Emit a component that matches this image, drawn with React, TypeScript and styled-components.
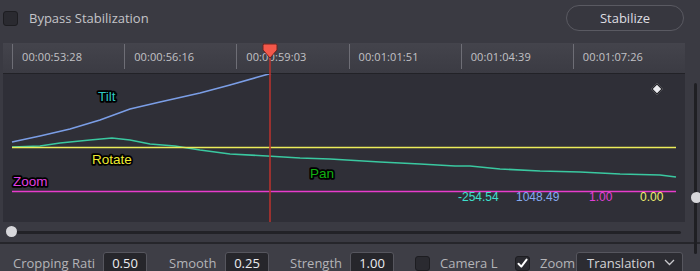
import React from 'react'
import styled, { createGlobalStyle } from 'styled-components'

const GlobalStyle = createGlobalStyle`
  html, body {
    margin: 0;
    padding: 0;
    background: #3a3a42;
  }
  * { box-sizing: border-box; }
`

const Page = styled.div`
  width: 700px;
  height: 271px;
  overflow: hidden;
  background: #3a3a42;
  font-family: 'Open Sans', 'Noto Sans', sans-serif;
  display: flex;
  flex-direction: column;
`

const TopBar = styled.div`
  height: 36px;
  display: flex;
  align-items: center;
  justify-content: space-between;
  padding: 0 16px 0 3px;
  flex-shrink: 0;
`

const CheckRow = styled.label`
  display: flex;
  align-items: center;
  gap: 11px;
  color: #c4c4c8;
  font-size: 13px;
`

const Box = styled.span`
  width: 15px;
  height: 15px;
  border-radius: 3px;
  background: #2a2a30;
  border: 1px solid #1d1d21;
  display: flex;
  align-items: center;
  justify-content: center;
  flex-shrink: 0;
`

const PillButton = styled.button`
  width: 118px;
  height: 26px;
  border-radius: 13px;
  border: 1px solid #5a5a62;
  background: #37373f;
  color: #dedee2;
  font-family: inherit;
  font-size: 13px;
`

const Middle = styled.div`
  display: flex;
  height: 206px;
  flex-shrink: 0;
`

const LeftCol = styled.div`
  width: 685px;
  padding: 7px 0 0 3px;
  display: flex;
  flex-direction: column;
`

const Panel = styled.div`
  position: relative;
  width: 682px;
  height: 179px;
  display: flex;
  flex-direction: column;
`

const Ruler = styled.div`
  height: 31px;
  display: flex;
  padding-left: 9px;
  background: linear-gradient(#44444c, #3b3b43);
  border-bottom: 1px solid #222227;
  flex-shrink: 0;
`

const Tick = styled.div`
  width: 113px;
  height: 25px;
  margin-top: 1px;
  border-left: 1px solid #6e6e76;
  padding-left: 9px;
  display: flex;
  align-items: center;
  color: #c2c2c6;
  font-size: 11px;
  letter-spacing: 0.1px;
`

const Graph = styled.div`
  flex: 1;
  background: #2f2f37;
`

const Playhead = styled.div`
  position: absolute;
  left: 256px;
  top: 0;
  width: 19px;
  height: 179px;
  pointer-events: none;
`

const Diamond = styled.div`
  position: absolute;
  left: 650px;
  top: 42px;
  width: 8px;
  height: 8px;
  background: #ececf0;
  border: 1px solid #1a1a1e;
  transform: rotate(45deg);
`

const HScroll = styled.div`
  position: relative;
  height: 20px;
  display: flex;
  align-items: center;
  padding-left: 5px;
`

const HTrack = styled.div`
  width: 673px;
  height: 3px;
  background: #222227;
  border-radius: 2px;
`

const Knob = styled.div`
  position: absolute;
  width: 11px;
  height: 11px;
  border-radius: 50%;
  background: #d8d8dc;
`

const VScroll = styled.div`
  position: relative;
  width: 15px;
  padding: 47px 0 0 9px;
`

const VTrack = styled.div`
  width: 3px;
  height: 171px;
  background: #1f1f23;
  border-radius: 2px;
`

const Divider = styled.div`
  height: 2px;
  background: #26262b;
  flex-shrink: 0;
`

const BottomBar = styled.div`
  flex: 1;
  background: #3e3e46;
  display: flex;
  align-items: flex-start;
  padding: 8px 0 0 13px;
  color: #b4b4b8;
  font-size: 13px;
`

const Field = styled.div<{ $mr: number }>`
  display: flex;
  align-items: center;
  gap: 7px;
  margin-right: ${p => p.$mr}px;
  flex-shrink: 0;
`

const Label = styled.span<{ $w: number }>`
  width: ${p => p.$w}px;
  white-space: nowrap;
  flex-shrink: 0;
`

const ValueBox = styled.div`
  width: 44px;
  height: 22px;
  background: #26262b;
  border: 1px solid #56565e;
  border-radius: 3px;
  color: #ececf0;
  display: flex;
  align-items: center;
  justify-content: center;
  flex-shrink: 0;
  padding-bottom: 1px;
`

const CheckField = styled.div<{ $mr: number }>`
  display: flex;
  align-items: center;
  gap: 10px;
  height: 22px;
  margin-right: ${p => p.$mr}px;
  flex-shrink: 0;
`

const Dropdown = styled.div`
  width: 107px;
  height: 22px;
  background: #2c2c32;
  border: 1px solid #56565e;
  border-radius: 3px;
  color: #d4d4d8;
  display: flex;
  align-items: center;
  gap: 9px;
  padding: 0 0 1px 10px;
`

const ticks = ['00:00:53:28', '00:00:56:16', '00:00:59:03', '00:01:01:51', '00:01:04:39', '00:01:07:26']

const tiltPts = '12,143 40,137 70,130 100,121 130,110 160,103 200,94 230,86 258,78 276,73'
const panPts =
  '12,148 40,147 60,144 90,141 112,139 130,141 150,145 175,147 200,151 230,155 267,157 300,159 330,160 380,163 420,165 455,167 470,167 500,170 540,172 580,173 620,175 660,176 676,178'

const outline = { paintOrder: 'stroke' as const, stroke: '#000', strokeWidth: 3.5, strokeLinejoin: 'round' as const }

const Chart: React.FC = () => (
  <svg width="682" height="147" viewBox="3 75 682 147" style={{ display: 'block' }}>
    <polyline points={tiltPts} fill="none" stroke="#7b9ee6" strokeWidth="1.6" />
    <polyline points={panPts} fill="none" stroke="#3ac8a0" strokeWidth="1.6" />
    <line x1="12" y1="148.5" x2="676" y2="148.5" stroke="#ecec5a" strokeWidth="1.3" />
    <line x1="12" y1="192.5" x2="676" y2="192.5" stroke="#e83ccc" strokeWidth="1.3" />
    <g fontFamily="'Liberation Sans', Arial, sans-serif" fontSize="13.5">
      <text x="98" y="102" fill="#2ec6c4" style={outline}>Tilt</text>
      <text x="92" y="165" fill="#eeea30" style={outline}>Rotate</text>
      <text x="13" y="187" fill="#e040e0" style={outline}>Zoom</text>
      <text x="310" y="179" fill="#12b012" style={outline}>Pan</text>
    </g>
    <g fontFamily="'Liberation Sans', Arial, sans-serif" fontSize="12">
      <text x="458" y="202" fill="#3ee0cc">-254.54</text>
      <text x="516" y="202" fill="#86aaf0">1048.49</text>
      <text x="589" y="202" fill="#e040d8">1.00</text>
      <text x="640" y="202" fill="#f0f070">0.00</text>
    </g>
  </svg>
)

const App: React.FC = () => {
  return (
    <>
      <GlobalStyle />
      <Page>
        <TopBar>
          <CheckRow>
            <Box />
            Bypass Stabilization
          </CheckRow>
          <PillButton>Stabilize</PillButton>
        </TopBar>

        <Middle>
          <LeftCol>
            <Panel>
              <Ruler>
                {ticks.map(t => (
                  <Tick key={t}>{t}</Tick>
                ))}
              </Ruler>
              <Graph>
                <Chart />
              </Graph>
              <Diamond />
              <Playhead>
                <svg width="19" height="179" viewBox="0 0 19 179">
                  <line x1="11" y1="12" x2="11" y2="179" stroke="#b5332e" strokeWidth="1.6" />
                  <path d="M4.5 1 H17 Q18 1 18 2.5 V7 L11 15 L4 7 V2.5 Q4 1 5 1 Z" fill="#f4584a" stroke="#6e221e" strokeWidth="1" />
                </svg>
              </Playhead>
            </Panel>
            <HScroll>
              <HTrack />
              <Knob style={{ left: 3, top: 4 }} />
            </HScroll>
          </LeftCol>
          <VScroll>
            <VTrack />
            <Knob style={{ left: 6, top: 156 }} />
          </VScroll>
        </Middle>

        <Divider />

        <BottomBar>
          <Field $mr={22}>
            <Label $w={83}>Cropping Rati</Label>
            <ValueBox>0.50</ValueBox>
          </Field>
          <Field $mr={21}>
            <Label $w={49}>Smooth</Label>
            <ValueBox>0.25</ValueBox>
          </Field>
          <Field $mr={21}>
            <Label $w={53}>Strength</Label>
            <ValueBox>1.00</ValueBox>
          </Field>
          <CheckField $mr={10}>
            <Box />
            <Label $w={65}>Camera L</Label>
          </CheckField>
          <CheckField $mr={0}>
            <Box>
              <svg width="13" height="13" viewBox="0 0 13 13">
                <path d="M2.5 6.8 L5.3 9.6 L10.6 2.6" fill="none" stroke="#fff" strokeWidth="2" strokeLinecap="round" strokeLinejoin="round" />
              </svg>
            </Box>
            <Label $w={36}>Zoom</Label>
          </CheckField>
          <Dropdown>
            Translation
            <svg width="11" height="7" viewBox="0 0 11 7">
              <path d="M1 1 L5.5 5.5 L10 1" fill="none" stroke="#c8c8cc" strokeWidth="1.3" />
            </svg>
          </Dropdown>
        </BottomBar>
      </Page>
    </>
  )
}

export default App
